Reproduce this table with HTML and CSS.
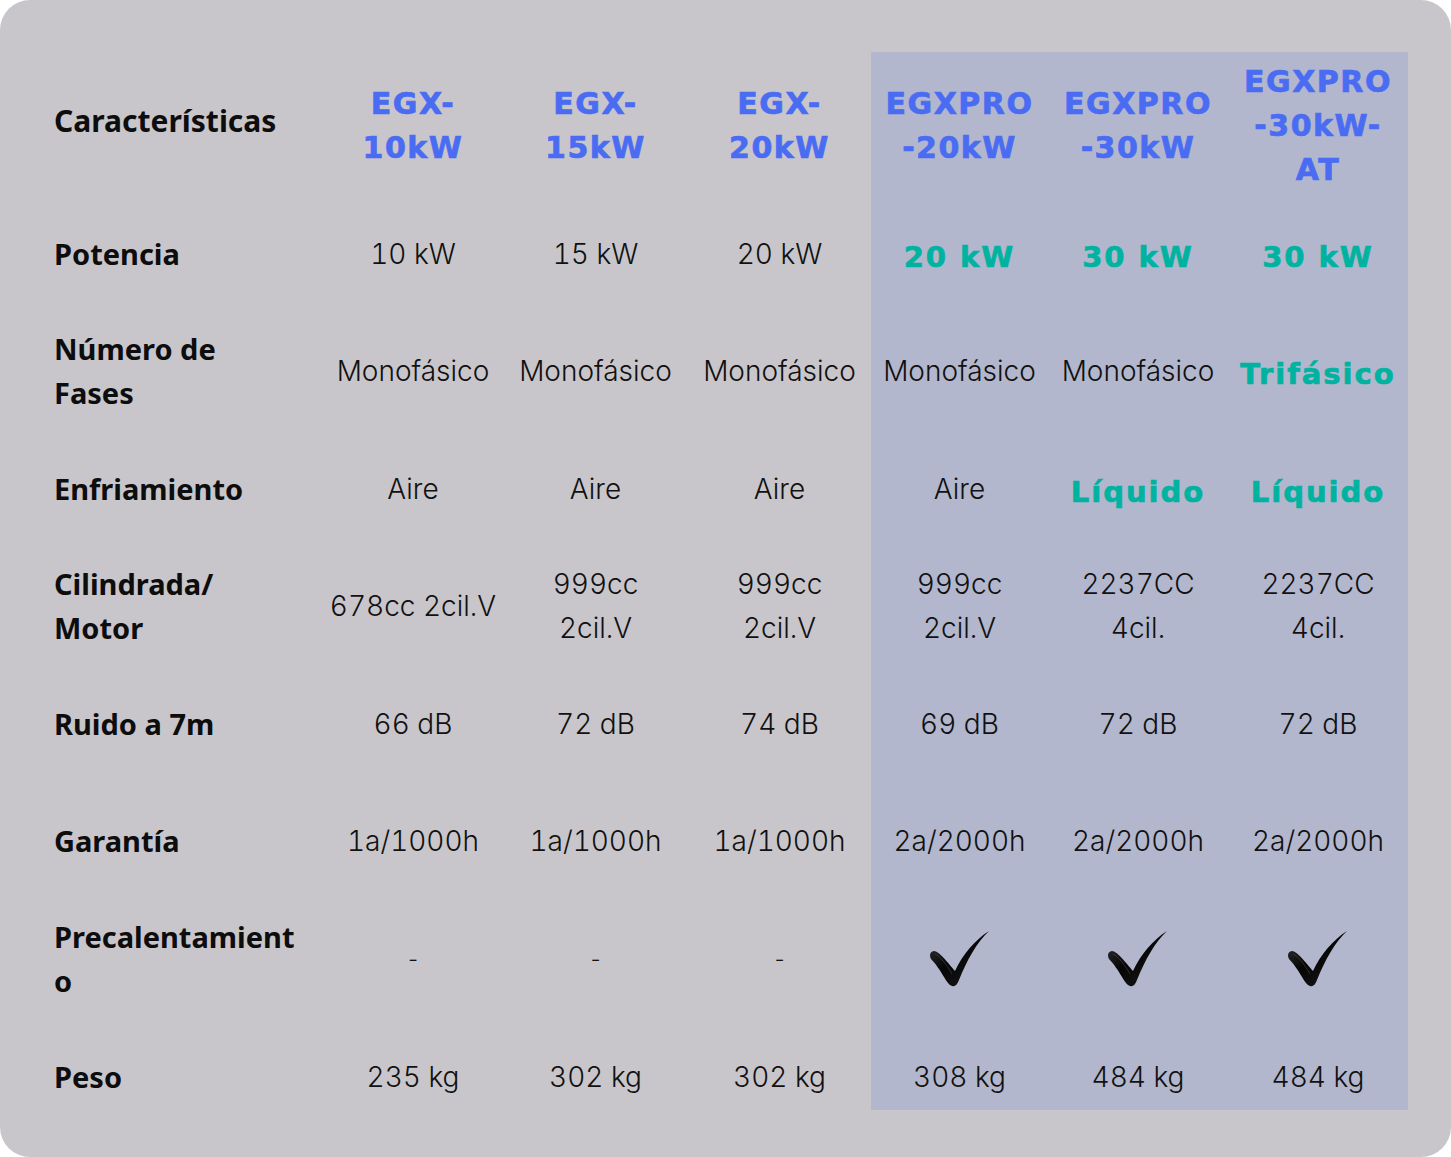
FILE: index.html
```html
<!DOCTYPE html>
<html lang="es">
<head>
<meta charset="utf-8">
<title>Comparativa</title>
<link rel="stylesheet" href="styles.css">
</head>
<body>
<div class="card">
  <svg class="defs" width="0" height="0" aria-hidden="true"><defs><linearGradient id="g" x1="0" y1="0" x2="1" y2="1"><stop offset="0" stop-color="#3a3a3a"/><stop offset="0.45" stop-color="#050505"/><stop offset="0.7" stop-color="#111"/><stop offset="1" stop-color="#000"/></linearGradient><symbol id="tick" viewBox="0 0 60 58"><path d="M4 21 C9 21 18 33 25 41 C33 24 45 10 59 1 C47 12 37 30 29 50 C27 55 25 57 22 56 C19 55 17 52 14 47 C10 40 5 33 1 29 C-1 26 0 21 4 21 Z" fill="url(#g)"/><path d="M5 24 C10 26 17 35 22 44" fill="none" stroke="#555" stroke-width="1" opacity="0.5"/></symbol></defs></svg>
  <div class="grid">
    <div class="cell label head">Características</div>
    <div class="cell model">EGX-<br>10kW</div>
    <div class="cell model">EGX-<br>15kW</div>
    <div class="cell model">EGX-<br>20kW</div>
    <div class="cell model hl">EGXPRO<br>-20kW</div>
    <div class="cell model hl">EGXPRO<br>-30kW</div>
    <div class="cell model hl">EGXPRO<br>-30kW-<br>AT</div>

    <div class="cell label">Potencia</div>
    <div class="cell val">10 kW</div>
    <div class="cell val">15 kW</div>
    <div class="cell val">20 kW</div>
    <div class="cell val hl strong">20 kW</div>
    <div class="cell val hl strong">30 kW</div>
    <div class="cell val hl strong">30 kW</div>

    <div class="cell label">Número de<br>Fases</div>
    <div class="cell val">Monofásico</div>
    <div class="cell val">Monofásico</div>
    <div class="cell val">Monofásico</div>
    <div class="cell val hl">Monofásico</div>
    <div class="cell val hl">Monofásico</div>
    <div class="cell val hl strong">Trifásico</div>

    <div class="cell label">Enfriamiento</div>
    <div class="cell val">Aire</div>
    <div class="cell val">Aire</div>
    <div class="cell val">Aire</div>
    <div class="cell val hl">Aire</div>
    <div class="cell val hl strong">Líquido</div>
    <div class="cell val hl strong">Líquido</div>

    <div class="cell label">Cilindrada/<br>Motor</div>
    <div class="cell val">678cc 2cil.V</div>
    <div class="cell val">999cc<br>2cil.V</div>
    <div class="cell val">999cc<br>2cil.V</div>
    <div class="cell val hl">999cc<br>2cil.V</div>
    <div class="cell val hl">2237CC<br>4cil.</div>
    <div class="cell val hl">2237CC<br>4cil.</div>

    <div class="cell label">Ruido a 7m</div>
    <div class="cell val">66 dB</div>
    <div class="cell val">72 dB</div>
    <div class="cell val">74 dB</div>
    <div class="cell val hl">69 dB</div>
    <div class="cell val hl">72 dB</div>
    <div class="cell val hl">72 dB</div>

    <div class="cell label">Garantía</div>
    <div class="cell val">1a/1000h</div>
    <div class="cell val">1a/1000h</div>
    <div class="cell val">1a/1000h</div>
    <div class="cell val hl">2a/2000h</div>
    <div class="cell val hl">2a/2000h</div>
    <div class="cell val hl">2a/2000h</div>

    <div class="cell label">Precalentamient<br>o</div>
    <div class="cell val dash">-</div>
    <div class="cell val dash">-</div>
    <div class="cell val dash">-</div>
    <div class="cell val hl"><svg class="check"><use href="#tick"/></svg></div>
    <div class="cell val hl"><svg class="check"><use href="#tick"/></svg></div>
    <div class="cell val hl"><svg class="check"><use href="#tick"/></svg></div>

    <div class="cell label last">Peso</div>
    <div class="cell val last">235 kg</div>
    <div class="cell val last">302 kg</div>
    <div class="cell val last">302 kg</div>
    <div class="cell val hl last">308 kg</div>
    <div class="cell val hl last">484 kg</div>
    <div class="cell val hl last">484 kg</div>
  </div>
</div>
</body>
</html>
```
FILE: styles.css
```css
html, body {
  margin: 0;
  padding: 0;
  background: #ffffff;
}
.defs {
  position: absolute;
  width: 0;
  height: 0;
}
.card {
  width: 1451px;
  height: 1157px;
  box-sizing: border-box;
  background: #c8c6ca;
  border-radius: 30px;
  padding: 52px 0 0 54px;
}
.grid {
  display: grid;
  grid-template-columns: 269px 180px 185px 183px 177px 180px 180px;
  grid-template-rows: 143px repeat(7, 117.5px) 92.5px;
}
.cell {
  display: flex;
  align-items: center;
  justify-content: center;
  text-align: center;
  line-height: 44px;
  color: #111;
}
.label {
  justify-content: flex-start;
  text-align: left;
  font-family: "Noto Sans", sans-serif;
  font-weight: 700;
  font-size: 29px;
  color: #0d0d0d;
}
.label.head {
  padding-bottom: 6px;
  font-size: 30px;
}
.model {
  font-family: "DejaVu Sans", sans-serif;
  font-weight: 700;
  font-size: 30px;
  letter-spacing: 1.5px;
  color: #4a6cf2;
  -webkit-text-stroke: 0.7px #4a6cf2;
  padding-top: 4px;
}
.val {
  font-family: "Inter", sans-serif;
  font-weight: 300;
  font-size: 28px;
  font-feature-settings: "tnum" 1;
}
.val.strong {
  font-family: "DejaVu Sans", sans-serif;
  font-weight: 700;
  font-size: 29px;
  letter-spacing: 2px;
  color: #00b3a0;
  -webkit-text-stroke: 0.7px #00b3a0;
  padding-top: 6px;
}
.hl {
  background: #b2b7cd;
}
.last {
  align-items: flex-start;
  padding-top: 37px;
}
.dash {
  font-size: 22px;
}
.check {
  width: 60px;
  height: 58px;
}
```
